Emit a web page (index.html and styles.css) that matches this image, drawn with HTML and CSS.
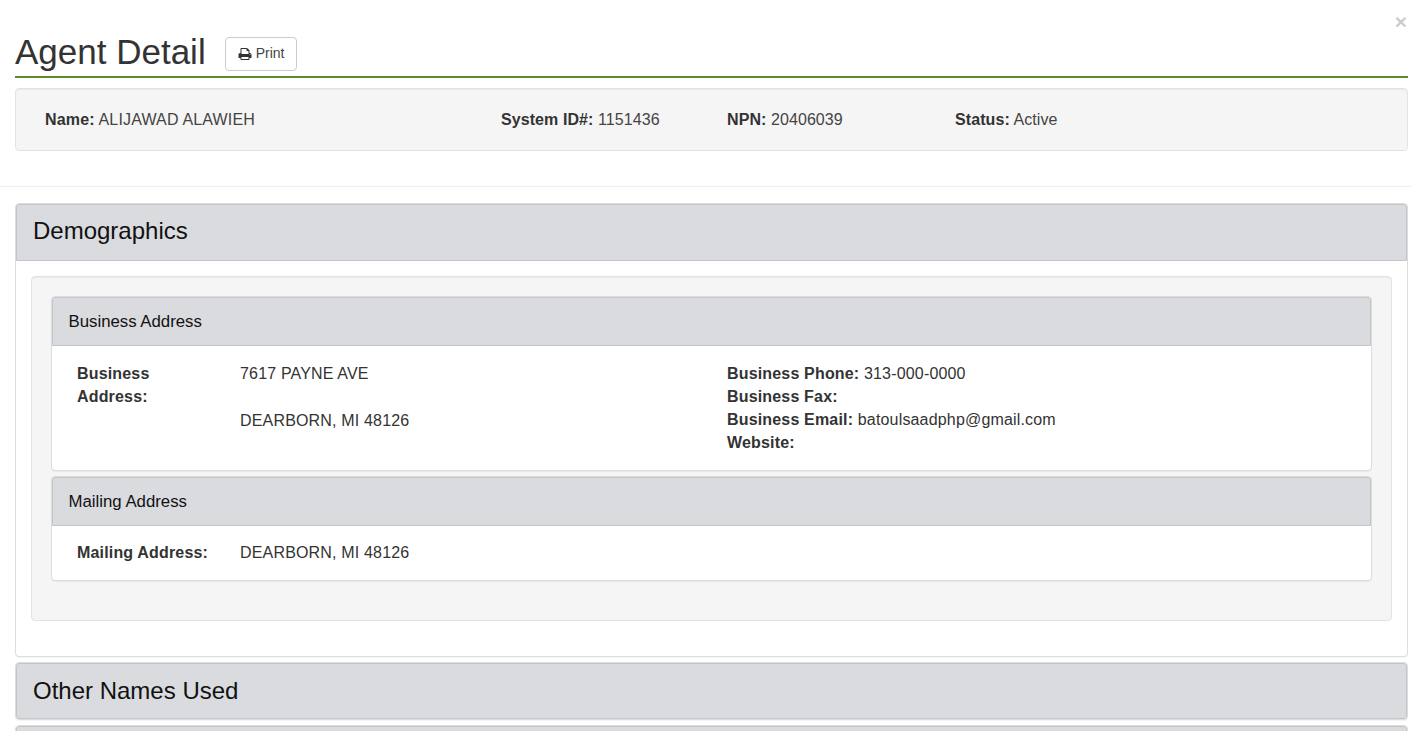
FILE: index.html
```html
<!DOCTYPE html>
<html lang="en">
<head>
<meta charset="utf-8">
<title>Agent Detail</title>
<link rel="stylesheet" href="styles.css">
</head>
<body>
<button class="close" type="button">×</button>
<div class="top">
  <header class="page-header">
    <h1>Agent Detail</h1>
    <button class="btn" type="button">
      <svg class="icon" viewBox="0 0 1792 1792" aria-hidden="true"><path d="M448 1536h896v-256h-896v256zm0-640h896v-384h-160q-40 0-68-28t-28-68v-160h-640v640zm1152 64q0-26-19-45t-45-19-45 19-19 45 19 45 45 19 45-19 19-45zm128 0v416q0 13-9.5 22.5t-22.5 9.5h-224v160q0 40-28 68t-68 28h-960q-40 0-68-28t-28-68v-160h-224q-13 0-22.5-9.5t-9.5-22.5v-416q0-79 56.5-135.5t135.5-56.5h64v-544q0-40 28-68t68-28h672q40 0 88 20t76 48l152 152q28 28 48 76t20 88v256h64q79 0 135.5 56.5t56.5 135.5z"/></svg>
      <span>Print</span>
    </button>
  </header>
  <div class="well summary">
    <div class="s-name"><b>Name:</b> ALIJAWAD ALAWIEH</div>
    <div class="s-id"><b>System ID#:</b> 1151436</div>
    <div class="s-npn"><b>NPN:</b> 20406039</div>
    <div><b>Status:</b> Active</div>
  </div>
</div>
<hr class="divider">
<main class="content">
  <section class="panel">
    <h2 class="panel-title panel-title-open">Demographics</h2>
    <div class="panel-body">
      <div class="well inner">
        <section class="sub">
          <h3 class="sub-title">Business Address</h3>
          <div class="sub-body sub-body-first">
            <div class="label"><b>Business Address:</b></div>
            <div class="value">
              <div>7617 PAYNE AVE</div>
              <div class="blank"></div>
              <div>DEARBORN, MI 48126</div>
            </div>
            <div class="contact">
              <div><b>Business Phone:</b> 313-000-0000</div>
              <div><b>Business Fax:</b></div>
              <div><b>Business Email:</b> batoulsaadphp@gmail.com</div>
              <div><b>Website:</b></div>
            </div>
          </div>
        </section>
        <section class="sub">
          <h3 class="sub-title">Mailing Address</h3>
          <div class="sub-body">
            <div class="label"><b>Mailing Address:</b></div>
            <div class="value">DEARBORN, MI 48126</div>
          </div>
        </section>
      </div>
    </div>
  </section>
  <section class="panel">
    <h2 class="panel-title">Other Names Used</h2>
  </section>
  <section class="panel">
    <h2 class="panel-title">&nbsp;</h2>
  </section>
</main>
</body>
</html>
```
FILE: styles.css
```css
* { box-sizing: border-box; }
html, body { height: 100%; overflow: hidden; }
body {
  margin: 0;
  font-family: "Liberation Sans", Arial, sans-serif;
  font-size: 16px;
  line-height: 1.42857;
  letter-spacing: .17px;
  color: #333;
  background: #fff;
  position: relative;
}
b { font-weight: 700; }
.close {
  position: absolute;
  top: 11px;
  right: 4px;
  padding: 0;
  border: 0;
  background: none;
  font: 700 21px/1 "Liberation Sans", Arial, sans-serif;
  color: #000;
  opacity: .2;
}
.top { padding: 0 3px 0 15px; }
.page-header {
  display: flex;
  align-items: flex-end;
  gap: 19px;
  height: 78px;
  padding-bottom: 5px;
  border-bottom: 2px solid #5b8c2a;
}
h1 {
  margin: 0 0 -1px;
  font-size: 35px;
  font-weight: 400;
  line-height: 40px;
  letter-spacing: 0;
}
.btn {
  display: inline-flex;
  align-items: center;
  gap: 4px;
  height: 34px;
  padding: 0 12px 2px;
  border: 1px solid #ccc;
  border-radius: 4px;
  background: #fff;
  color: #444;
  font: 14px/20px "Liberation Sans", Arial, sans-serif;
}
.icon { width: 14px; height: 14px; fill: #333; margin-top: 1px; }
.well {
  background: #f5f5f5;
  border: 1px solid #e3e3e3;
  border-radius: 4px;
  box-shadow: inset 0 1px 1px rgba(0,0,0,.05);
}
.summary {
  display: flex;
  margin-top: 10px;
  padding: 19px 29px;
  color: #444;
  letter-spacing: .08px;
}
.summary b { color: #333; }
.summary > div { line-height: 23px; }
.s-name { width: 456px; letter-spacing: .17px; }
.s-id { width: 226px; }
.s-npn { width: 228px; }
.divider {
  margin: 35px 0 16px;
  border: 0;
  border-top: 1px solid #eee;
}
.content { padding: 0 3px 0 15px; }
.panel {
  margin-bottom: 5px;
  background: #fff;
  border: 1px solid #ddd;
  border-radius: 4px;
  box-shadow: 0 1px 1px rgba(0,0,0,.05);
}
.panel-title {
  margin: 0;
  padding: 14px 16px 0;
  height: 56px;
  font-size: 24px;
  font-weight: 400;
  line-height: 26px;
  letter-spacing: 0;
  color: #111;
  background: #dadbdf;
  border: 1px solid #c1c6c9;
  border-radius: 3px 3px 0 0;
}
.panel-title-open { height: 57px; padding-top: 13px; }
.panel > .panel-title:last-child { border-radius: 3px; }
.panel-body { padding: 15px; }
.inner { padding: 19px; margin-bottom: 20px; }
.sub {
  background: #fff;
  border: 1px solid #ddd;
  border-radius: 4px;
  box-shadow: 0 1px 1px rgba(0,0,0,.05);
}
.sub + .sub { margin-top: 5px; margin-bottom: 20px; }
.sub-title {
  margin: 0;
  padding: 15px 15px 14px 15.5px;
  font-size: 16.8px;
  font-weight: 400;
  line-height: 1.1;
  letter-spacing: 0;
  color: #111;
  background: #dadbdf;
  border: 1px solid #c1c6c9;
  border-radius: 3px 3px 0 0;
}
.sub-body {
  display: grid;
  grid-template-columns: 163px 487px 1fr;
  padding: 16px 25px 14.7px;
}
.sub-body-first { padding: 16.5px 25px 15.6px; }
.label { padding-right: 30px; }
.blank { height: 24px; }
```
